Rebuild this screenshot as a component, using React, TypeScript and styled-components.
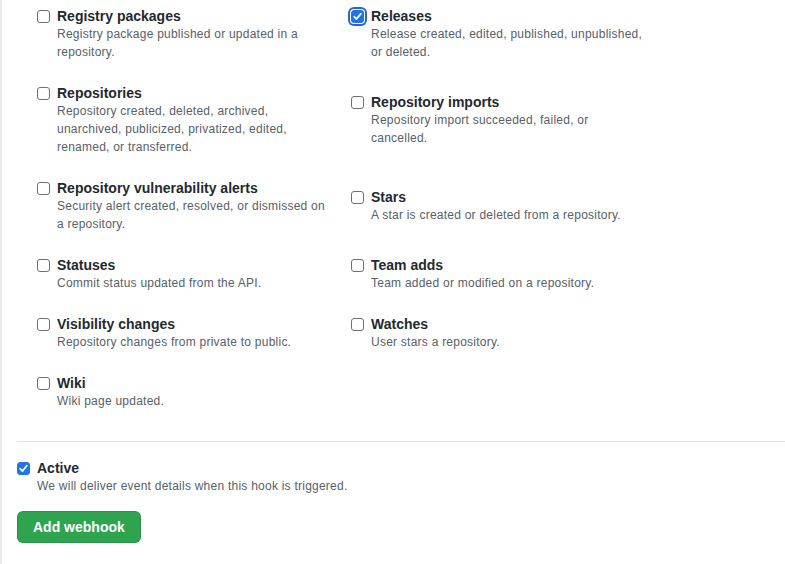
import React from "react";
import styled, { createGlobalStyle, css } from "styled-components";

const GlobalStyle = createGlobalStyle`
  html, body { margin: 0; padding: 0; background: #ffffff; }
  body {
    font-family: "Liberation Sans", Arial, sans-serif;
    color: #24292e;
    -webkit-font-smoothing: antialiased;
  }
`;

const Page = styled.div`
  box-sizing: border-box;
  min-height: 564px;
  border-left: 2px solid #e9ebee;
  padding: 7px 0 0 15px;
`;

const EventsSection = styled.section`
  padding: 0 0 31px 20px;
  border-bottom: 1px solid #e1e4e8;
`;

const EventGrid = styled.div`
  display: grid;
  grid-template-columns: 314px 314px;
  row-gap: 23px;
  align-items: center;
`;

const Item = styled.label`
  display: flex;
  align-items: flex-start;
  cursor: pointer;
`;

const Box = styled.span<{ $checked?: boolean; $focused?: boolean }>`
  flex: none;
  box-sizing: border-box;
  width: 13px;
  height: 13px;
  margin: 3px 7px 0 0;
  border-radius: 3px;
  border: 1px solid ${(p) => (p.$checked ? "#2574e4" : "#707070")};
  background: ${(p) => (p.$checked ? "#2574e4" : "#ffffff")};
  display: flex;
  align-items: center;
  justify-content: center;
  ${(p) =>
    p.$focused &&
    css`
      box-shadow: 0 0 0 1px #ffffff, 0 0 0 3px #2068dc;
    `}
`;

const TextBlock = styled.div<{ $narrow?: boolean }>`
  max-width: ${(p) => (p.$narrow ? "276px" : "none")};
`;

const Title = styled.div`
  font-size: 14px;
  font-weight: 700;
  line-height: 18px;
  color: #24292e;
`;

const Desc = styled.div`
  font-size: 12px;
  line-height: 18px;
  letter-spacing: 0.24px;
  color: #586069;
`;

const ActiveSection = styled.section`
  padding-top: 17px;
`;

const Button = styled.button`
  display: block;
  box-sizing: border-box;
  height: 32px;
  margin-top: 16px;
  padding: 0 15px;
  font-family: "Liberation Sans", Arial, sans-serif;
  font-size: 14px;
  font-weight: 700;
  line-height: 20px;
  color: #ffffff;
  background: #2ea44f;
  border: 1px solid rgba(27, 31, 35, 0.15);
  border-radius: 6px;
  cursor: pointer;
`;

function Check() {
  return (
    <svg width="9" height="9" viewBox="0 0 9 9" aria-hidden="true">
      <polyline
        points="1.3,4.8 3.5,7 7.8,1.8"
        fill="none"
        stroke="#ffffff"
        strokeWidth="1.8"
        strokeLinecap="round"
        strokeLinejoin="round"
      />
    </svg>
  );
}

type CheckProps = {
  title: string;
  desc: string;
  checked?: boolean;
  focused?: boolean;
  narrow?: boolean;
};

function CheckItem({ title, desc, checked, focused, narrow }: CheckProps) {
  return (
    <Item>
      <Box role="checkbox" aria-checked={!!checked} $checked={checked} $focused={focused}>
        {checked && <Check />}
      </Box>
      <TextBlock $narrow={narrow}>
        <Title>{title}</Title>
        <Desc>{desc}</Desc>
      </TextBlock>
    </Item>
  );
}

const events: CheckProps[] = [
  { title: "Registry packages", desc: "Registry package published or updated in a repository." },
  { title: "Releases", desc: "Release created, edited, published, unpublished, or deleted.", checked: true, focused: true },
  { title: "Repositories", desc: "Repository created, deleted, archived, unarchived, publicized, privatized, edited, renamed, or transferred." },
  { title: "Repository imports", desc: "Repository import succeeded, failed, or cancelled." },
  { title: "Repository vulnerability alerts", desc: "Security alert created, resolved, or dismissed on a repository." },
  { title: "Stars", desc: "A star is created or deleted from a repository." },
  { title: "Statuses", desc: "Commit status updated from the API." },
  { title: "Team adds", desc: "Team added or modified on a repository." },
  { title: "Visibility changes", desc: "Repository changes from private to public." },
  { title: "Watches", desc: "User stars a repository." },
  { title: "Wiki", desc: "Wiki page updated." },
];

export default function App() {
  return (
    <>
      <GlobalStyle />
      <Page>
        <EventsSection>
          <EventGrid>
            {events.map((e) => (
              <CheckItem key={e.title} {...e} narrow />
            ))}
          </EventGrid>
        </EventsSection>
        <ActiveSection>
          <CheckItem
            title="Active"
            desc="We will deliver event details when this hook is triggered."
            checked
          />
          <Button type="button">Add webhook</Button>
        </ActiveSection>
      </Page>
    </>
  );
}
